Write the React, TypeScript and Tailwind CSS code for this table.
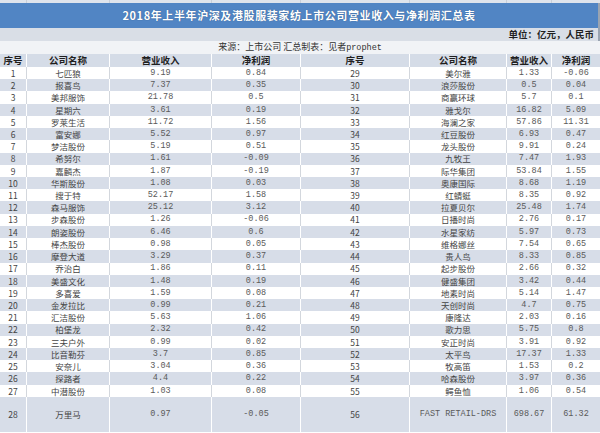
import React from "react";

type Row = [string, string, string, string];

const left: Row[] = [
  ["1", "七匹狼", "9.19", "0.84"],
  ["2", "报喜鸟", "7.37", "0.35"],
  ["3", "美邦服饰", "21.78", "0.5"],
  ["4", "星期六", "3.61", "0.19"],
  ["5", "罗莱生活", "11.72", "1.56"],
  ["6", "富安娜", "5.52", "0.97"],
  ["7", "梦洁股份", "5.19", "0.51"],
  ["8", "希努尔", "1.61", "-0.09"],
  ["9", "嘉麟杰", "1.87", "-0.19"],
  ["10", "华斯股份", "1.08", "0.03"],
  ["11", "搜于特", "52.17", "1.58"],
  ["12", "森马服饰", "25.12", "3.12"],
  ["13", "步森股份", "1.26", "-0.06"],
  ["14", "朗姿股份", "6.46", "0.6"],
  ["15", "棒杰股份", "0.98", "0.05"],
  ["16", "摩登大道", "3.29", "0.37"],
  ["17", "乔治白", "1.86", "0.11"],
  ["18", "美盛文化", "1.48", "0.19"],
  ["19", "多喜爱", "1.59", "0.08"],
  ["20", "金发拉比", "0.99", "0.21"],
  ["21", "汇洁股份", "5.63", "1.06"],
  ["22", "柏堡龙", "2.32", "0.42"],
  ["23", "三夫户外", "0.99", "0.02"],
  ["24", "比音勒芬", "3.7", "0.85"],
  ["25", "安奈儿", "3.04", "0.36"],
  ["26", "探路者", "4.4", "0.22"],
  ["27", "中潜股份", "1.03", "0.08"],
];

const right: Row[] = [
  ["29", "美尔雅", "1.33", "-0.06"],
  ["30", "浪莎股份", "0.5", "0.04"],
  ["31", "商赢环球", "5.7", "0.1"],
  ["32", "雅戈尔", "16.82", "5.09"],
  ["33", "海澜之家", "57.86", "11.31"],
  ["34", "红豆股份", "6.93", "0.47"],
  ["35", "龙头股份", "9.91", "0.24"],
  ["36", "九牧王", "7.47", "1.93"],
  ["37", "际华集团", "53.84", "1.55"],
  ["38", "奥康国际", "8.68", "1.19"],
  ["39", "红蜻蜓", "8.35", "0.92"],
  ["40", "拉夏贝尔", "25.48", "1.74"],
  ["41", "日播时尚", "2.76", "0.17"],
  ["42", "水星家纺", "5.97", "0.73"],
  ["43", "维格娜丝", "7.54", "0.65"],
  ["44", "贵人鸟", "8.33", "0.85"],
  ["45", "起步股份", "2.66", "0.32"],
  ["46", "健盛集团", "3.42", "0.44"],
  ["47", "地素时尚", "5.14", "1.47"],
  ["48", "天创时尚", "4.7", "0.75"],
  ["49", "康隆达", "2.03", "0.16"],
  ["50", "歌力思", "5.75", "0.8"],
  ["51", "安正时尚", "3.91", "0.92"],
  ["52", "太平鸟", "17.37", "1.33"],
  ["53", "牧高笛", "1.53", "0.2"],
  ["54", "哈森股份", "3.97", "0.36"],
  ["55", "鳄鱼恤", "1.06", "0.54"],
];

const cols = "grid grid-cols-[27px_83px_102px_89px_109px_97px_45px_48px]";
const cjk = "font-['Noto_Sans_CJK_SC',sans-serif]";
const mono = "font-['Liberation_Mono',monospace]";

function Cell({
  children,
  kind,
  shaded,
  last,
}: {
  children: React.ReactNode;
  kind: "num" | "name";
  shaded: boolean;
  last?: boolean;
}) {
  return (
    <div
      className={`flex items-center justify-center overflow-hidden whitespace-nowrap leading-none ${
        last ? "" : "border-r"
      } ${shaded ? "border-white" : "border-[#d3d7dd]"} ${
        kind === "num"
          ? `${mono} text-[8.5px] text-[#5a5a5a]`
          : `${cjk} text-[8.5px] text-[#444]`
      }`}
    >
      {children}
    </div>
  );
}

function DataRow({ l, r, idx, tall }: { l: Row; r: Row; idx: number; tall?: boolean }) {
  const shaded = idx % 2 === 1;
  return (
    <div
      className={`${cols} ${tall ? "h-[35px]" : "h-[12.22px]"} ${
        shaded ? "bg-[#d7dde8]" : "bg-white"
      }`}
    >
      <Cell kind="name" shaded={shaded}>{l[0]}</Cell>
      <Cell kind="name" shaded={shaded}>{l[1]}</Cell>
      <Cell kind="num" shaded={shaded}>{l[2]}</Cell>
      <Cell kind="num" shaded={shaded}>{l[3]}</Cell>
      <Cell kind="name" shaded={shaded}>{r[0]}</Cell>
      <Cell kind={/^[A-Z]/.test(r[1]) ? "num" : "name"} shaded={shaded}>{r[1]}</Cell>
      <Cell kind="num" shaded={shaded}>{r[2]}</Cell>
      <Cell kind="num" shaded={shaded} last>{r[3]}</Cell>
    </div>
  );
}

export default function App() {
  const headers = ["序号", "公司名称", "营业收入", "净利润", "序号", "公司名称", "营业收入", "净利润"];
  return (
    <div className="w-[600px] h-[433px] bg-white overflow-hidden">
      <div className={`${cols} h-[3px] bg-[#dfe4ec]`}>
        {headers.map((_, i) => (
          <div key={i} className={i < 7 ? "border-r border-[#c9cfd8]" : ""} />
        ))}
      </div>
      <div className="h-[25px] bg-[#5185c4] flex items-center justify-center border-r-2 border-[#9aa4b1]">
        <span
          className={`${cjk} text-[11px] font-bold text-white tracking-[0.6px] [text-shadow:0_0_1px_#2b4f7d]`}
        >
          2018年上半年沪深及港股服装家纺上市公司营业收入与净利润汇总表
        </span>
      </div>
      <div className="h-[13px] bg-[#d9dee6] flex items-center justify-end pr-[4px] border-r-2 border-[#9aa4b1]">
        <span className={`${cjk} text-[9.5px] font-bold text-[#1f1f1f] leading-none`}>
          单位：亿元，人民币
        </span>
      </div>
      <div className="h-[13px] bg-[#f1f3f6] flex items-center justify-center">
        <span className={`${cjk} text-[9px] text-[#333] leading-none`}>
          来源：上市公司 汇总制表：见者<span className={`${mono} text-[8.5px]`}>prophet</span>
        </span>
      </div>
      <div className={`${cols} h-[13px] bg-[#d5dce7]`}>
        {headers.map((h, i) => (
          <div
            key={i}
            className={`flex items-center justify-center leading-none ${cjk} text-[9.5px] font-bold text-[#1f1f1f] ${
              i < 7 ? "border-r border-white" : ""
            }`}
          >
            {h}
          </div>
        ))}
      </div>
      {left.map((l, i) => (
        <DataRow key={i} l={l} r={right[i]} idx={i} />
      ))}
      <DataRow
        l={["28", "万里马", "0.97", "-0.05"]}
        r={["56", "FAST RETAIL-DRS", "698.67", "61.32"]}
        idx={27}
        tall
      />
    </div>
  );
}
